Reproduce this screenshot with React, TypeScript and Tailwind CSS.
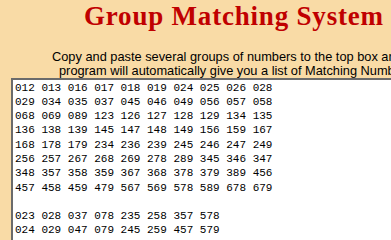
const groups = [
  "012 013 016 017 018 019 024 025 026 028",
  "029 034 035 037 045 046 049 056 057 058",
  "068 069 089 123 126 127 128 129 134 135",
  "136 138 139 145 147 148 149 156 159 167",
  "168 178 179 234 236 239 245 246 247 249",
  "256 257 267 268 269 278 289 345 346 347",
  "348 357 358 359 367 368 378 379 389 456",
  "457 458 459 479 567 569 578 589 678 679",
  "",
  "023 028 037 078 235 258 357 578",
  "024 029 047 079 245 259 457 579",
];

export default function App() {
  return (
    <div className="w-[391px] h-[240px] overflow-hidden bg-[#f9dba6]">
      <h1
        className="pl-[84px] pt-[1px] whitespace-nowrap text-[27px] leading-[31px] tracking-[0.8px] font-bold text-[#c00000]"
        style={{ fontFamily: '"Liberation Serif", "DejaVu Serif", serif' }}
      >
        Group Matching System
      </h1>
      <div
        className="pt-[17.5px] text-[12.8px] leading-[14px] text-black whitespace-nowrap"
        style={{ fontFamily: '"Liberation Sans", Arial, sans-serif' }}
      >
        <p className="pl-[52px]">Copy and paste several groups of numbers to the top box and the</p>
        <p className="pl-[59px]">program will automatically give you a list of Matching Numbers.</p>
      </div>
      <div className="ml-[11px] w-[400px] h-[200px] bg-white border-t-2 border-l-2 border-[#6b6b6b] pl-[2px] pt-[1px]">
        <div
          className="text-[11px] leading-[14.3px] text-black whitespace-pre"
          style={{ fontFamily: '"Liberation Mono", "DejaVu Sans Mono", monospace' }}
        >
          {groups.map((g, i) => (
            <div key={i} className="h-[14.3px]">{g}</div>
          ))}
        </div>
      </div>
    </div>
  );
}
